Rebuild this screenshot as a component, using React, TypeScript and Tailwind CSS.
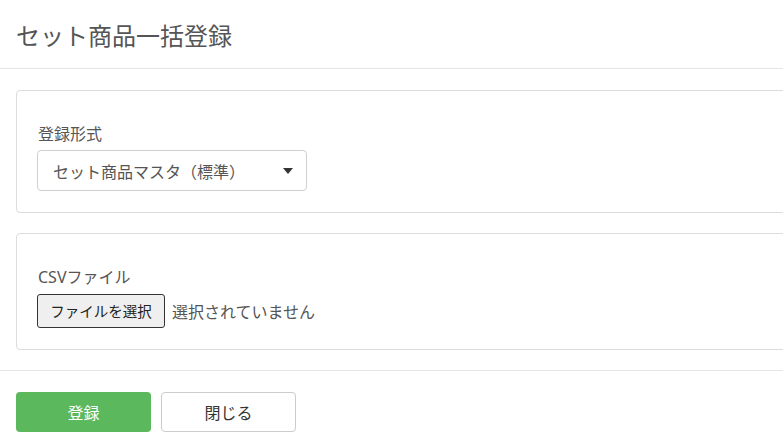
import React from "react";

export default function App() {
  const font = { fontFamily: '"Noto Sans CJK JP", "Noto Sans", sans-serif' };
  return (
    <div className="w-full overflow-hidden bg-white text-[#555]" style={font}>
      <div className="w-[1000px]">
        <div className="h-[69px] border-b border-[#e5e5e5] px-4 flex items-center">
          <h1 className="text-[24px] leading-[32px] text-[#555] pt-[1px]">セット商品一括登録</h1>
        </div>
        <div className="px-4 pt-[21px] pb-[20px] flex flex-col gap-[20px] border-b border-[#e5e5e5]">
          <div className="border border-[#dcdcdc] rounded-[4px] pl-[20px] pt-[30px] pb-[21px]">
            <div className="text-[16px] leading-[24px] mb-[5px] pl-[1px]">登録形式</div>
            <div className="w-[270px] h-[41px] border border-[#cfcfcf] rounded-[4px] flex items-center justify-between pl-[15px] pr-[13px]">
              <span className="text-[16px] text-[#555]">セット商品マスタ（標準）</span>
              <svg width="10" height="6" viewBox="0 0 10 6">
                <path d="M0 0 L10 0 L5 6 Z" fill="#333" />
              </svg>
            </div>
          </div>
          <div className="border border-[#dcdcdc] rounded-[4px] pl-[20px] pt-[30px] pb-[21px]">
            <div className="text-[16px] leading-[24px] mb-[5px] pl-[1px]">
              <span style={{ fontFamily: '"Noto Sans", sans-serif' }}>CSV</span>ファイル
            </div>
            <div className="flex items-center">
              <div className="h-[34px] w-[128px] border border-[#333] rounded-[3px] bg-[#efefef] flex items-center justify-center text-[14.5px] text-[#222]">
                ファイルを選択
              </div>
              <span className="ml-[7px] text-[16px] text-[#555]">選択されていません</span>
            </div>
          </div>
        </div>
        <div className="px-4 pt-[21px] pb-4 flex gap-[10px]">
          <button className="w-[135px] h-[40px] rounded-[4px] bg-[#5cb85c] text-white text-[16px]">登録</button>
          <button className="w-[135px] h-[40px] rounded-[4px] border border-[#ccc] bg-white text-[#333] text-[16px]">閉じる</button>
        </div>
      </div>
    </div>
  );
}
